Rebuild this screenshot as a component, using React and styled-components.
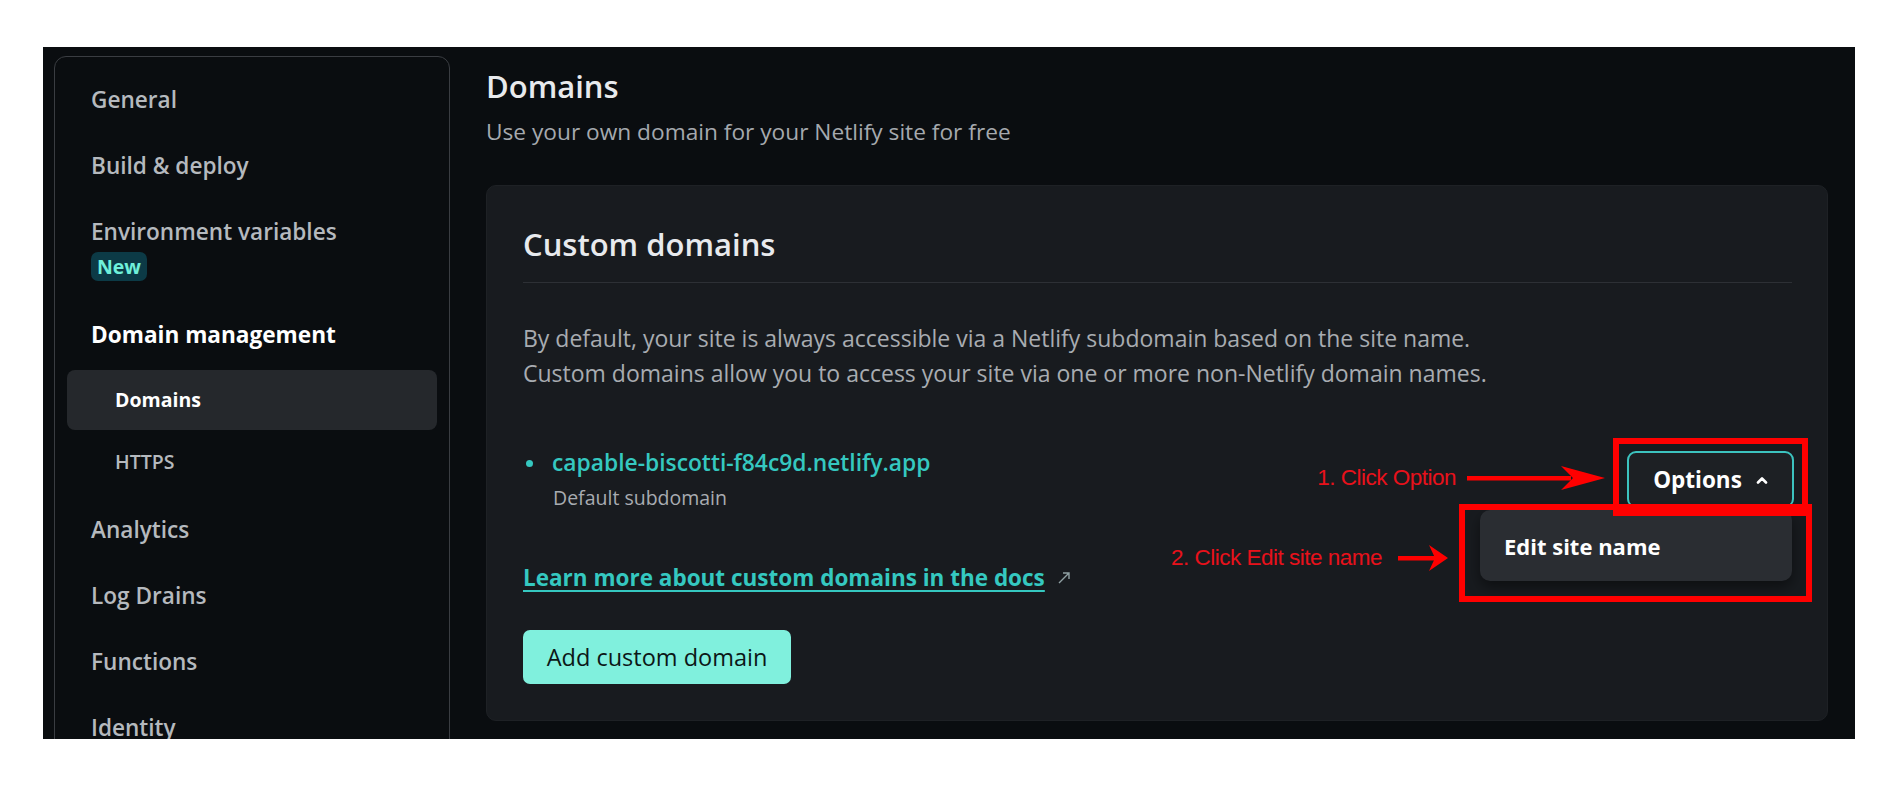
import React from 'react';
import styled, { createGlobalStyle } from 'styled-components';

const GlobalStyle = createGlobalStyle`
  html, body {
    margin: 0;
    padding: 0;
    background: #ffffff;
  }
  body {
    font-family: "Open Sans", "Noto Sans", sans-serif;
  }
  * {
    box-sizing: border-box;
  }
`;

const Frame = styled.div`
  margin: 47px 0 0 43px;
  width: 1812px;
  height: 692px;
  background: #0a0d10;
  overflow: hidden;
  display: flex;
  align-items: flex-start;
`;

const Sidebar = styled.nav`
  flex-shrink: 0;
  margin: 9px 0 0 11px;
  width: 396px;
  height: 760px;
  border: 1px solid #3a3d42;
  border-radius: 12px;
  padding-top: 10px;
`;

const NavItem = styled.div`
  padding: 19px 36px;
  font-size: 22.6px;
  line-height: 28px;
  font-weight: ${p => (p.$active ? 700 : 600)};
  color: ${p => (p.$active ? '#ffffff' : '#b5b9be')};
  white-space: nowrap;
`;

const Badge = styled.span`
  display: block;
  width: fit-content;
  margin: 6px 0 2px;
  padding: 0 6px;
  height: 29px;
  line-height: 29px;
  border-radius: 7px;
  background: #0c3a46;
  color: #6ff0da;
  font-size: 19.5px;
  font-weight: 700;
`;

const SubList = styled.div`
  display: flex;
  flex-direction: column;
  gap: 2px;
  margin: 2px 12px 5px;
`;

const SubItem = styled.div`
  height: 60px;
  line-height: 60px;
  padding-left: 48px;
  border-radius: 8px;
  font-size: 19.5px;
  font-weight: ${p => (p.$active ? 700 : 600)};
  color: ${p => (p.$active ? '#ffffff' : '#b5b9be')};
  background: ${p => (p.$active ? '#25282c' : 'transparent')};
`;

const Main = styled.main`
  margin-left: 36px;
  width: 1342px;
  flex-shrink: 0;
`;

const PageTitle = styled.h1`
  margin: 19px 0 0;
  font-size: 31px;
  line-height: 40px;
  font-weight: 600;
  color: #e8eaed;
`;

const PageSubtitle = styled.p`
  margin: 11px 0 0;
  font-size: 22.7px;
  line-height: 30px;
  color: #a5a9ae;
`;

const Card = styled.section`
  margin-top: 38px;
  background: #181b1f;
  border: 1px solid #1e2125;
  border-radius: 10px;
  padding: 38px 35px 36px 36px;
`;

const CardTitle = styled.h2`
  margin: 0;
  padding-bottom: 18px;
  border-bottom: 1px solid #2d3035;
  font-size: 31px;
  line-height: 40px;
  font-weight: 600;
  color: #e8eaed;
`;

const Paragraph = styled.p`
  margin: 38px 0 0;
  font-size: 23px;
  line-height: 35px;
  color: #a8acb1;
`;

const DomainRow = styled.div`
  margin-top: 56px;
  display: flex;
  justify-content: space-between;
  align-items: flex-start;
`;

const DomainInfo = styled.div`
  display: flex;
  flex-direction: column;
  gap: 5px;
`;

const DomainName = styled.div`
  display: flex;
  align-items: center;
  gap: 19px;
  margin-left: 3px;
  font-size: 22.8px;
  line-height: 32px;
  font-weight: 600;
  color: #35c8c0;

  &::before {
    content: '';
    width: 7px;
    height: 7px;
    border-radius: 50%;
    background: #35c8c0;
  }
`;

const DomainNote = styled.div`
  padding-left: 30px;
  font-size: 19.5px;
  line-height: 28px;
  color: #a8acb1;
`;

const OptionsWrap = styled.div`
  position: relative;
  margin: 4px -2px 0 0;
`;

const OptionsButton = styled.button`
  display: flex;
  align-items: center;
  justify-content: center;
  gap: 14px;
  width: 167px;
  height: 57px;
  border: 2px solid #3cc3bf;
  border-radius: 9px;
  background: #1d2024;
  color: #ffffff;
  font-family: inherit;
  font-size: 22.5px;
  font-weight: 700;
  cursor: pointer;
`;

const Menu = styled.div`
  position: absolute;
  top: 59px;
  right: 2px;
  width: 312px;
  height: 71px;
  display: flex;
  align-items: center;
  padding-left: 24px;
  border-radius: 10px;
  background: #2a2d32;
  box-shadow: 0 6px 14px rgba(0, 0, 0, 0.45);
  color: #ffffff;
  font-size: 22px;
  font-weight: 700;
`;

const RedBox = styled.div`
  position: absolute;
  left: ${p => p.$left}px;
  top: ${p => p.$top}px;
  width: ${p => p.$width}px;
  height: ${p => p.$height}px;
  border: 6px solid #ff0000;
  pointer-events: none;
`;

const Note = styled.div`
  position: absolute;
  right: calc(100% + ${p => p.$gap}px);
  top: ${p => p.$top}px;
  transform: translateY(-50%);
  display: flex;
  align-items: center;
  gap: ${p => p.$spacing}px;
  white-space: nowrap;
  color: #e8111b;
  font-family: "Liberation Sans", sans-serif;
  font-size: 22.5px;
  letter-spacing: -0.5px;
`;

const DocsLink = styled.a`
  display: flex;
  align-items: center;
  gap: 12px;
  margin-top: 50px;
  width: fit-content;
  font-size: 22.5px;
  line-height: 32px;
  font-weight: 700;
  color: #35c8c0;
  text-decoration: none;

  span {
    text-decoration: underline;
    text-underline-offset: 4px;
    text-decoration-thickness: 2px;
  }
`;

const AddButton = styled.button`
  margin-top: 36px;
  width: 268px;
  height: 54px;
  border: none;
  border-radius: 7px;
  background: #80f0dd;
  color: #0c1717;
  font-family: inherit;
  font-size: 23.5px;
  cursor: pointer;
`;

const Caret = () => (
  <svg width="12" height="8" viewBox="0 0 12 8">
    <polyline points="2,6.5 6,2.5 10,6.5" fill="none" stroke="#ffffff" strokeWidth="2.6" strokeLinecap="round" strokeLinejoin="round" />
  </svg>
);

const External = () => (
  <svg width="14" height="14" viewBox="0 0 14 14">
    <path d="M2 12 L12 2 M6 2 H12 V8" fill="none" stroke="#8fa0a3" strokeWidth="1.4" />
  </svg>
);

const LongArrow = () => (
  <svg width="138" height="26" viewBox="0 0 138 26">
    <rect x="0" y="11" width="104" height="4.5" fill="#ff0000" />
    <path d="M94 1 L138 13 L94 25 L106 13 Z" fill="#ff0000" />
  </svg>
);

const ShortArrow = () => (
  <svg width="50" height="28" viewBox="0 0 50 28">
    <rect x="0" y="12" width="38" height="4.5" fill="#ff0000" />
    <path d="M31 1 L50 14 L31 27 L37 14 Z" fill="#ff0000" />
  </svg>
);

const sideTop = ['General', 'Build & deploy'];
const sideBottom = ['Analytics', 'Log Drains', 'Functions', 'Identity'];

const App = () => {
  return (
    <>
      <GlobalStyle />
      <Frame>
        <Sidebar>
          {sideTop.map(label => (
            <NavItem key={label}>{label}</NavItem>
          ))}
          <NavItem>
            Environment variables
            <Badge>New</Badge>
          </NavItem>
          <NavItem $active>Domain management</NavItem>
          <SubList>
            <SubItem $active>Domains</SubItem>
            <SubItem>HTTPS</SubItem>
          </SubList>
          {sideBottom.map(label => (
            <NavItem key={label}>{label}</NavItem>
          ))}
        </Sidebar>

        <Main>
          <PageTitle>Domains</PageTitle>
          <PageSubtitle>Use your own domain for your Netlify site for free</PageSubtitle>

          <Card>
            <CardTitle>Custom domains</CardTitle>
            <Paragraph>
              By default, your site is always accessible via a Netlify subdomain based on the site name.
              <br />
              Custom domains allow you to access your site via one or more non-Netlify domain names.
            </Paragraph>

            <DomainRow>
              <DomainInfo>
                <DomainName>capable-biscotti-f84c9d.netlify.app</DomainName>
                <DomainNote>Default subdomain</DomainNote>
              </DomainInfo>

              <OptionsWrap>
                <OptionsButton>
                  Options
                  <Caret />
                </OptionsButton>
                <Menu>Edit site name</Menu>

                <RedBox $left={-14} $top={-13} $width={195} $height={78} />
                <RedBox $left={-168} $top={53} $width={353} $height={98} />

                <Note $gap={22} $top={27} $spacing={11}>
                  1. Click Option
                  <LongArrow />
                </Note>
                <Note $gap={179} $top={107} $spacing={16}>
                  2. Click Edit site name
                  <ShortArrow />
                </Note>
              </OptionsWrap>
            </DomainRow>

            <DocsLink href="#">
              <span>Learn more about custom domains in the docs</span>
              <External />
            </DocsLink>

            <AddButton>Add custom domain</AddButton>
          </Card>
        </Main>
      </Frame>
    </>
  );
};

export default App;
